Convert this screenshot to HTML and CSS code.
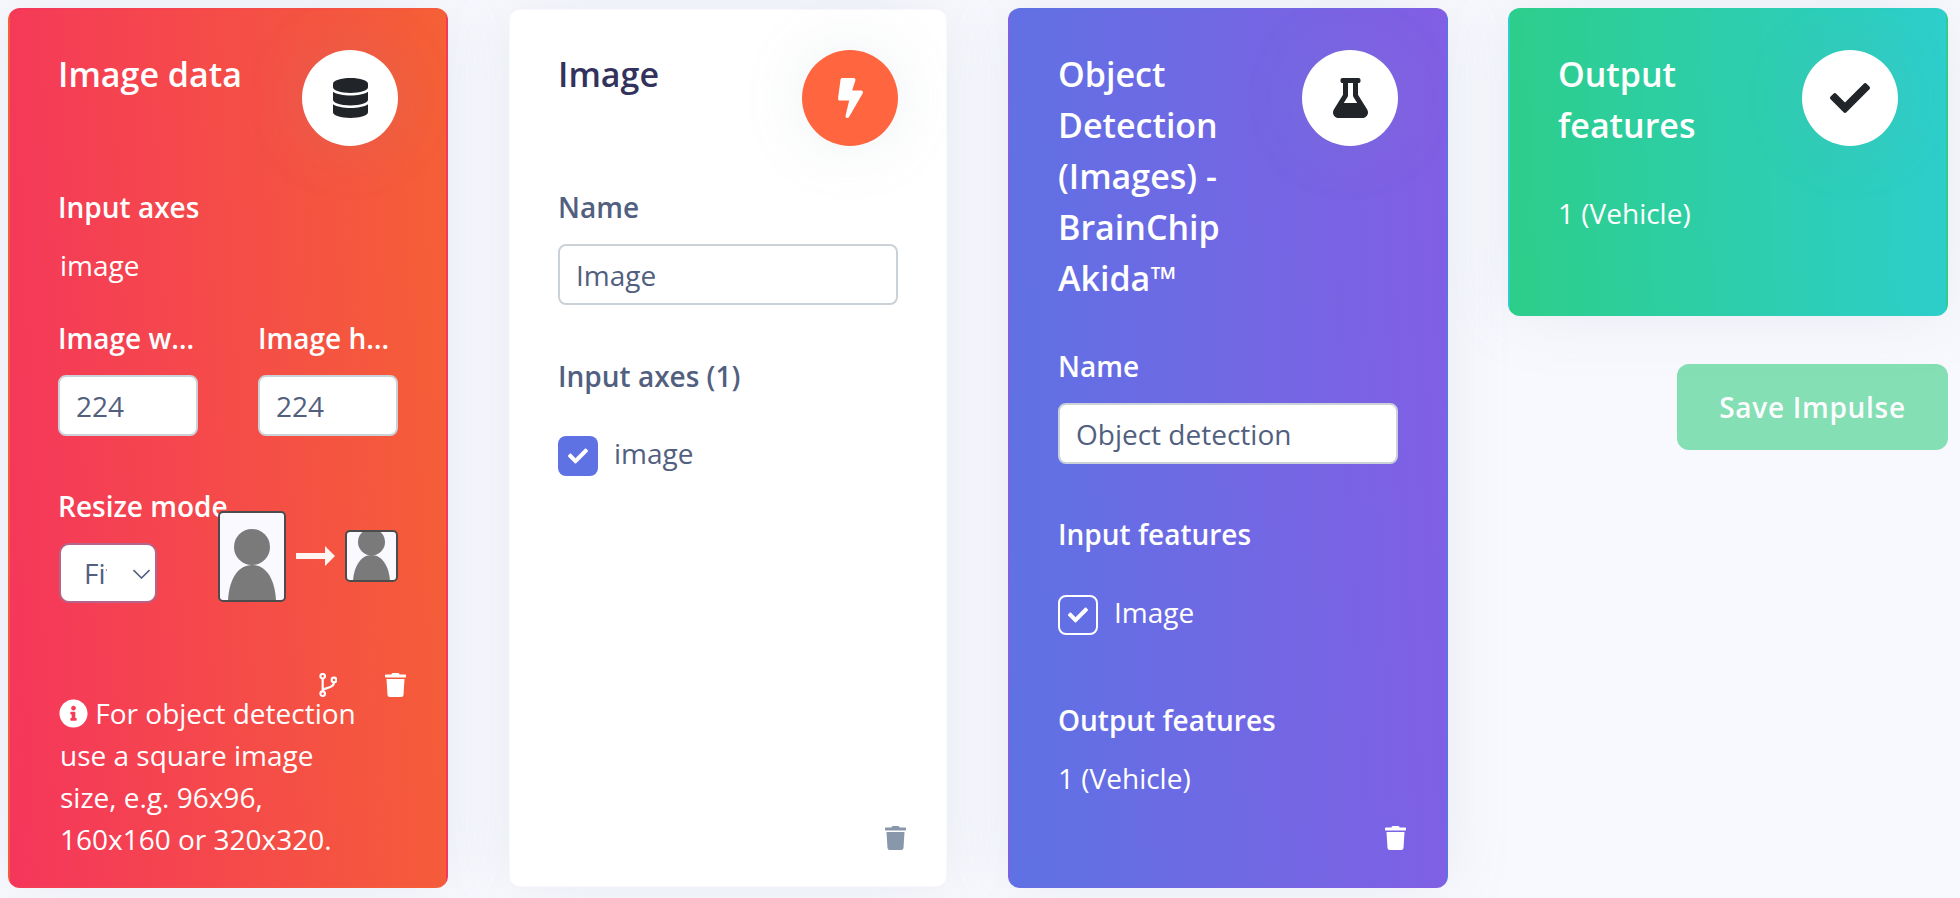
FILE: index.html
```html
<!DOCTYPE html>
<html lang="en">
<head>
    <meta charset="UTF-8">
    <title>Create impulse</title>
    <link rel="stylesheet" href="styles.css">
</head>
<body>
    <div class="impulse">
        <!-- Input block -->
        <section class="card card-danger">
            <div class="card-head">
                <h3>Image data</h3>
                <div class="icon-circle icon-white">
                    <svg class="icon icon-lg" viewBox="0 0 448 512"><path d="M448 73.143v45.714C448 159.143 347.667 192 224 192S0 159.143 0 118.857V73.143C0 32.857 100.333 0 224 0s224 32.857 224 73.143zM448 176v102.857C448 319.143 347.667 352 224 352S0 319.143 0 278.857V176c48.125 33.143 136.208 48.572 224 48.572S399.874 209.143 448 176zm0 160v102.857C448 479.143 347.667 512 224 512S0 479.143 0 438.857V336c48.125 33.143 136.208 48.572 224 48.572S399.874 369.143 448 336z"/></svg>
                </div>
            </div>
            <div class="field field-tight">
                <label>Input axes</label>
                <div class="value value-inset">image</div>
            </div>
            <div class="field-row">
                <div class="field">
                    <label class="truncate">Image width</label>
                    <input type="text" class="input" value="224">
                </div>
                <div class="field">
                    <label class="truncate">Image height</label>
                    <input type="text" class="input" value="224">
                </div>
            </div>
            <div class="field resize">
                <label>Resize mode</label>
                <div class="resize-row">
                    <div class="select-wrap">
                        <select class="select"><option>Fit shortest axis</option></select>
                        <svg class="chevron" viewBox="0 0 17 10"><path d="M.5 1l8 8 8-8" fill="none" stroke="#525f7f" stroke-width="1.600"/></svg>
                    </div>
                    <div class="resize-preview">
                        <svg class="photo-big" viewBox="0 0 68 91">
                            <rect x="1" y="1" width="66" height="89" rx="4" fill="#f9f9ff"/>
                            <circle cx="34" cy="36" r="18" fill="#7a7a7a"/>
                            <path d="M10 90C11 68 20 54 34 54s23 14 24 36z" fill="#7a7a7a"/>
                            <rect x="1" y="1" width="66" height="89" rx="4" fill="none" stroke="#4c4c4c" stroke-width="2"/>
                        </svg>
                        <svg class="arrow" viewBox="0 0 39 20"><path d="M0 7h29V0l10 10-10 10v-7H0z" fill="#fff6f3"/></svg>
                        <svg class="photo-small" viewBox="0 0 53 52">
                            <rect x="1" y="1" width="51" height="50" rx="4" fill="#f9f9ff"/>
                            <circle cx="26.500" cy="12" r="13.500" fill="#7a7a7a"/>
                            <path d="M8 51C9 36 16 25 26.500 25S44 36 45 51z" fill="#7a7a7a"/>
                            <rect x="1" y="1" width="51" height="50" rx="4" fill="none" stroke="#4c4c4c" stroke-width="2"/>
                        </svg>
                    </div>
                </div>
            </div>
            <div class="card-actions card-actions-flow">
                <svg class="branch" viewBox="0 0 18 24" fill="none" stroke="currentColor" stroke-width="2.200">
                    <circle cx="3.700" cy="3.200" r="2.300"/>
                    <circle cx="3.700" cy="20.700" r="2.300"/>
                    <circle cx="15" cy="7" r="2.300"/>
                    <path d="M3.700 5.500v12.900M15 9.300c0 4-3.500 5-7 5.800-2.500.6-4.300 1.300-4.300 3.300"/>
                </svg>
                <svg class="trash" viewBox="0 0 448 512"><path d="M432 32H312l-9.400-18.700A24 24 0 0 0 281.100 0H166.800a23.720 23.720 0 0 0-21.400 13.300L136 32H16A16 16 0 0 0 0 48v32a16 16 0 0 0 16 16h416a16 16 0 0 0 16-16V48a16 16 0 0 0-16-16zM53.200 467a48 48 0 0 0 47.900 45h245.800a48 48 0 0 0 47.900-45L416 128H32z"/></svg>
            </div>
            <p class="note">
                <svg class="info" viewBox="0 0 512 512"><path d="M256 8C119.043 8 8 119.083 8 256c0 136.997 111.043 248 248 248s248-111.003 248-248C504 119.083 392.957 8 256 8zm0 110c23.196 0 42 18.804 42 42s-18.804 42-42 42-42-18.804-42-42 18.804-42 42-42zm56 254c0 6.627-5.373 12-12 12h-88c-6.627 0-12-5.373-12-12v-24c0-6.627 5.373-12 12-12h12v-64h-12c-6.627 0-12-5.373-12-12v-24c0-6.627 5.373-12 12-12h64c6.627 0 12 5.373 12 12v100h12c6.627 0 12 5.373 12 12v24z"/></svg>
                For object detection use a square image size, e.g. 96x96, 160x160 or 320x320.
            </p>
        </section>

        <!-- Processing block -->
        <section class="card card-white">
            <div class="card-head">
                <h3>Image</h3>
                <div class="icon-circle icon-orange">
                    <svg class="icon icon-bolt" viewBox="0 0 320 512"><path d="M296 160H180.600l42.600-129.800C227.200 15 215.700 0 200 0H56C44 0 33.800 8.900 32.200 20.800l-32 240C-1.700 275.200 9.500 288 24 288h118.700L96.600 482.500c-3.600 15.200 8 29.500 23.300 29.500 8.400 0 16.400-4.400 20.800-12l176-304c9.300-15.900-2.200-36-20.700-36z"/></svg>
                </div>
            </div>
            <div class="field">
                <label>Name</label>
                <input type="text" class="input input-wide" value="Image">
            </div>
            <div class="field">
                <label>Input axes (1)</label>
                <div class="check-row">
                    <span class="check check-on">
                        <svg viewBox="0 0 512 512"><path d="M173.898 439.404l-166.400-166.400c-9.997-9.997-9.997-26.206 0-36.204l36.203-36.204c9.997-9.998 26.207-9.998 36.204 0L192 312.690 432.095 72.596c9.997-9.997 26.207-9.997 36.204 0l36.203 36.204c9.997 9.997 9.997 26.206 0 36.204l-294.400 294.401c-9.998 9.997-26.207 9.997-36.204-.001z"/></svg>
                    </span>
                    <span class="check-text">image</span>
                </div>
            </div>
            <div class="card-actions">
                <svg class="trash" viewBox="0 0 448 512"><path d="M432 32H312l-9.400-18.700A24 24 0 0 0 281.100 0H166.800a23.720 23.720 0 0 0-21.400 13.300L136 32H16A16 16 0 0 0 0 48v32a16 16 0 0 0 16 16h416a16 16 0 0 0 16-16V48a16 16 0 0 0-16-16zM53.200 467a48 48 0 0 0 47.900 45h245.800a48 48 0 0 0 47.900-45L416 128H32z"/></svg>
            </div>
        </section>

        <!-- Learning block -->
        <section class="card card-primary">
            <div class="card-head">
                <h3>Object Detection (Images) - BrainChip Akida™</h3>
                <div class="icon-circle icon-white">
                    <svg class="icon icon-lg" viewBox="0 0 448 512"><path d="M437.200 403.500L320 215V64h8c13.300 0 24-10.700 24-24V24c0-13.300-10.700-24-24-24H120c-13.300 0-24 10.700-24 24v16c0 13.300 10.700 24 24 24h8v151L10.800 403.500C-18.500 450.600 15.300 512 70.900 512h306.200c55.700 0 89.400-61.500 60.100-108.500zM137.900 320l48.200-77.600c3.700-5.200 5.800-11.600 5.800-18.400V64h64v160c0 6.900 2.200 13.200 5.800 18.400l48.200 77.600h-172z"/></svg>
                </div>
            </div>
            <div class="field">
                <label>Name</label>
                <input type="text" class="input input-wide" value="Object detection">
            </div>
            <div class="field">
                <label>Input features</label>
                <div class="check-row">
                    <span class="check check-outline">
                        <svg viewBox="0 0 512 512"><path d="M173.898 439.404l-166.400-166.400c-9.997-9.997-9.997-26.206 0-36.204l36.203-36.204c9.997-9.998 26.207-9.998 36.204 0L192 312.690 432.095 72.596c9.997-9.997 26.207-9.997 36.204 0l36.203 36.204c9.997 9.997 9.997 26.206 0 36.204l-294.400 294.401c-9.998 9.997-26.207 9.997-36.204-.001z"/></svg>
                    </span>
                    <span class="check-text">Image</span>
                </div>
            </div>
            <div class="field field-output">
                <label>Output features</label>
                <div class="value">1 (Vehicle)</div>
            </div>
            <div class="card-actions">
                <svg class="trash" viewBox="0 0 448 512"><path d="M432 32H312l-9.400-18.700A24 24 0 0 0 281.100 0H166.800a23.720 23.720 0 0 0-21.400 13.300L136 32H16A16 16 0 0 0 0 48v32a16 16 0 0 0 16 16h416a16 16 0 0 0 16-16V48a16 16 0 0 0-16-16zM53.200 467a48 48 0 0 0 47.900 45h245.800a48 48 0 0 0 47.900-45L416 128H32z"/></svg>
            </div>
        </section>

        <!-- Output block and save -->
        <div class="output-col">
            <section class="card card-success">
                <div class="card-head">
                    <h3>Output features</h3>
                    <div class="icon-circle icon-white">
                        <svg class="icon icon-check" viewBox="0 0 512 512"><path d="M173.898 439.404l-166.400-166.400c-9.997-9.997-9.997-26.206 0-36.204l36.203-36.204c9.997-9.998 26.207-9.998 36.204 0L192 312.690 432.095 72.596c9.997-9.997 26.207-9.997 36.204 0l36.203 36.204c9.997 9.997 9.997 26.206 0 36.204l-294.400 294.401c-9.998 9.997-26.207 9.997-36.204-.001z"/></svg>
                    </div>
                </div>
                <div class="value">1 (Vehicle)</div>
            </section>
            <button class="btn-save" disabled>Save Impulse</button>
        </div>
    </div>
</body>
</html>
```

FILE: styles.css
```css
:root {
    --danger-start: #f5365c;
    --danger-end: #f56036;
    --primary-start: #5e72e4;
    --primary-end: #825ee4;
    --success-start: #2dce89;
    --success-end: #2dcecc;
    --text-color: #525f7f;
    --heading-color: #32325d;
    --input-border: #cad1d7;
}

* {
    margin: 0;
    padding: 0;
    box-sizing: border-box;
}

body {
    margin: 0;
    background-color: #f8f9fe;
    color: var(--text-color);
    font-family: 'Open Sans', sans-serif;
    font-size: 28px;
    line-height: 1.5;
    overflow: hidden;
    height: 898px;
}

.impulse {
    display: flex;
    align-items: stretch;
    gap: 60px;
    height: 880px;
    margin: 8px 12px 0 8px;
}

/* transparent border: the gradient repeats under it, which gives the thin edge */
.card {
    position: relative;
    display: flex;
    flex-direction: column;
    width: 440px;
    flex: none;
    padding: 40px 48px 36px;
    border: 2px solid transparent;
    border-radius: 12px;
    box-shadow: 0 0 64px 0 rgba(136, 152, 170, 0.15);
    color: #fff;
}

.card-danger {
    background-image: linear-gradient(87deg, var(--danger-start) 0, var(--danger-end) 100%);
}

.card-primary {
    background-image: linear-gradient(87deg, var(--primary-start) 0, var(--primary-end) 100%);
}

.card-success {
    background-image: linear-gradient(87deg, var(--success-start) 0, var(--success-end) 100%);
    height: 308px;
}

.card-white {
    background-color: #fff;
    background-clip: padding-box;
    color: var(--text-color);
}

.card-head {
    display: flex;
    justify-content: space-between;
    align-items: flex-start;
    gap: 12px;
    margin-bottom: 40px;
}

h3 {
    font-size: 34px;
    font-weight: 600;
    line-height: 1.5;
    margin: -1px 0 1px;
}

.card-white h3 {
    color: var(--heading-color);
}

.icon-circle {
    display: flex;
    align-items: center;
    justify-content: center;
    width: 96px;
    height: 96px;
    flex: none;
    border-radius: 50%;
    box-shadow: 0 0 64px 0 rgba(136, 152, 170, 0.15);
}

.icon-white {
    background-color: #fff;
    fill: #212529;
}

.icon-orange {
    background-color: #ff6640;
    fill: #fff;
}

.icon {
    display: block;
    height: 40px;
}

.icon-check {
    width: 40px;
}

.field {
    margin-bottom: 49px;
}

.field-tight {
    margin-bottom: 31px;
}

.card-white .field {
    margin-bottom: 50px;
}

label {
    display: block;
    font-weight: 600;
    margin-bottom: 16px;
}

.truncate {
    white-space: nowrap;
    overflow: hidden;
    text-overflow: ellipsis;
}

.value-inset {
    margin-left: 2px;
}

.field-row {
    display: grid;
    grid-template-columns: 140px 140px;
    gap: 60px;
}

.input {
    display: block;
    width: 100%;
    height: 61px;
    padding: 0 16px;
    border: 2px solid var(--input-border);
    border-radius: 8px;
    background-color: #fff;
    color: var(--text-color);
    font-family: inherit;
    font-size: 28px;
}

.resize {
    margin-bottom: 0;
}

.resize-row {
    display: flex;
    justify-content: space-between;
}

.select-wrap {
    position: relative;
    width: 98px;
    height: 60px;
    margin-left: 1px;
}

.select {
    appearance: none;
    display: block;
    width: 100%;
    height: 100%;
    padding: 0 48px 0 23px;
    border: 2px solid #b5648c;
    border-radius: 10px;
    background-color: #fff;
    color: var(--text-color);
    font-family: inherit;
    font-size: 28px;
}

.chevron {
    position: absolute;
    top: 26px;
    right: 7px;
    width: 17px;
    height: 10px;
}

.resize-preview {
    display: flex;
    align-items: center;
    height: 91px;
    margin-top: -32px;
}

.photo-big {
    display: block;
    width: 68px;
    height: 91px;
}

.arrow {
    display: block;
    width: 39px;
    height: 20px;
    margin: 0 10px 2px;
}

.photo-small {
    display: block;
    width: 53px;
    height: 52px;
    margin-bottom: 2px;
}

.card-actions {
    display: flex;
    justify-content: flex-end;
    align-items: center;
    gap: 48px;
    margin-top: auto;
    margin-right: -8px;
    color: #fff;
    fill: #fff;
}

.card-actions-flow {
    margin-top: 70px;
}

.card-white .card-actions {
    fill: #8898aa;
}

.branch {
    display: block;
    width: 18px;
    height: 24px;
}

.trash {
    display: block;
    width: 21px;
    height: 24px;
}

.note {
    width: 300px;
    margin-top: -5px;
    margin-left: 2px;
}

.info {
    width: 29px;
    height: 29px;
    margin-left: -1px;
    fill: #fff;
    vertical-align: -4px;
}

.check-row {
    display: flex;
    align-items: center;
    gap: 16px;
    margin-top: 40px;
}

.card-white .check-row {
    margin-top: 39px;
}

.check-text {
    margin-top: -6px;
}

.check {
    display: flex;
    align-items: center;
    justify-content: center;
    width: 40px;
    height: 40px;
    flex: none;
    border-radius: 8px;
}

.check svg {
    width: 20px;
    height: 20px;
    fill: #fff;
}

.check-on {
    background-color: var(--primary-start);
}

.check-outline {
    border: 2px solid #fff;
}

.field-output {
    margin-top: 15px;
    margin-bottom: 0;
}

.output-col {
    display: flex;
    flex-direction: column;
    align-items: flex-end;
    width: 440px;
    flex: none;
}

.btn-save {
    width: 271px;
    height: 86px;
    margin-top: 48px;
    border: 0;
    border-radius: 12px;
    background-color: #38ce84;
    color: #fff;
    opacity: 0.6;
    font-family: inherit;
    font-size: 28px;
    font-weight: 600;
    letter-spacing: 0.7px;
}
```
